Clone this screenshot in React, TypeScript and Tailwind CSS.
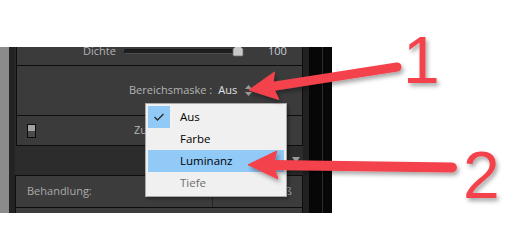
import React from "react";

const menuItems = [
    { label: "Aus", checked: true, active: false, disabled: false },
    { label: "Farbe", checked: false, active: false, disabled: false },
    { label: "Luminanz", checked: false, active: true, disabled: false },
    { label: "Tiefe", checked: false, active: false, disabled: true },
];

export default function App() {
    return (
        <div className="relative w-[518px] h-[242px] bg-white overflow-hidden font-['Open_Sans',sans-serif]">
            {/* Lightroom panel crop */}
            <div className="mt-[47px] flex w-[332px] h-[166px]">
                <div className="w-[9px] bg-[#8b8b8b]" />
                <div className="w-[6px] bg-[#232323]" />

                <div className="w-[288px] flex flex-col bg-[#2c2c2c]">
                    {/* Upper panel */}
                    <div className="ml-[1px] w-[287px] flex flex-col bg-[#3b3b3b] border-x border-[#0e0e0e]">
                        <div className="h-[19px] overflow-hidden border-b border-[#0e0e0e]">
                            <div className="-mt-[6px] h-[20px] flex items-center pl-[66px] text-[11px] text-[#b4b4b4]">
                                <span>Dichte</span>
                                <div className="relative ml-[8px] w-[118px] h-[5px] rounded-full bg-[#1e1e1e] border border-[#161616] border-b-[#4d4d4d]">
                                    <svg className="absolute -top-[6px] left-[107px]" width="12" height="13" viewBox="0 0 12 13">
                                        <path d="M6 0 L11 5 L11 11 Q11 12 10 12 L2 12 Q1 12 1 11 L1 5 Z" fill="#c9c9c9" stroke="#6a6a6a" strokeWidth="0.8" />
                                    </svg>
                                </div>
                                <span className="ml-[26px] text-[#c6d0da]">100</span>
                            </div>
                        </div>

                        <div className="h-[50px] flex items-center pl-[112px] border-b border-[#0e0e0e] text-[11px]">
                            <span className="text-[#b4b4b4]">Bereichsmaske :</span>
                            <span className="ml-[6px] text-[#e2e2e2]">Aus</span>
                            <svg className="ml-[8px]" width="7" height="11" viewBox="0 0 7 11">
                                <path d="M3.5 0 L7 4 L0 4 Z M0 7 L7 7 L3.5 11 Z" fill="#9a9a9a" />
                            </svg>
                        </div>

                        <div className="h-[30px] flex items-center pl-[10px] border-b border-[#0e0e0e] text-[11px] text-[#b4b4b4]">
                            <div className="w-[9px] h-[14px] flex flex-col border border-[#0c0c0c]">
                                <div className="h-1/2 bg-[#a2a2a2]" />
                                <div className="h-1/2 bg-[#4a4a4a]" />
                            </div>
                            <span className="ml-[98px]">Zurücksetzen</span>
                        </div>
                    </div>

                    {/* Section header gap */}
                    <div className="h-[29px] flex items-center justify-end pr-[3px]">
                        <svg width="8" height="7" viewBox="0 0 8 7">
                            <path d="M0 0 L8 0 L4 6 Z" fill="#9b9b9b" />
                        </svg>
                    </div>

                    {/* Lower panel */}
                    <div className="flex-1 flex flex-col bg-[#3c3c3c] border-x border-t border-[#0e0e0e]">
                        <div className="h-[32px] flex border-b border-[#0e0e0e] text-[11px] text-[#ababab]">
                            <div className="w-[197px] flex items-center pl-[11px] border-r border-[#262626]">
                                <span>Behandlung:</span>
                                <span className="ml-auto mr-[24px] text-[#c4c4c4]">Farbe</span>
                            </div>
                            <div className="flex-1 flex items-center justify-center pl-[2px] text-[#b4b4b4]">
                                Schwarzweiß
                            </div>
                        </div>
                        <div className="flex-1" />
                    </div>
                </div>

                <div className="w-[6px] bg-[#212121]" />
                <div className="w-[13px] bg-[#070707]" />
                <div className="w-[1px] bg-[#2e2e2e]" />
                <div className="w-[9px] bg-[#070707]" />
            </div>

            {/* Popup menu */}
            <div className="absolute left-[145px] top-[103px] w-[142px] p-[2px] bg-[#f0f0f0] border border-[#a9a9a9] shadow-[2px_2px_3px_rgba(0,0,0,0.35)] text-[11.5px]">
                {menuItems.map((item) => (
                    <div
                        key={item.label}
                        className={`h-[22px] flex items-center ${item.active ? "bg-[#91c9f7]" : ""}`}
                    >
                        <div className={`w-[22px] h-[22px] flex items-center justify-center ${item.checked ? "bg-[#91c9f7]" : ""}`}>
                            {item.checked && (
                                <svg width="12" height="10" viewBox="0 0 12 10">
                                    <path d="M1.5 5 L4.5 8 L10.5 2" fill="none" stroke="#2d2d2d" strokeWidth="1.4" />
                                </svg>
                            )}
                        </div>
                        <span className={`ml-[10px] ${item.disabled ? "text-[#6d6d6d]" : "text-black"}`}>
                            {item.label}
                        </span>
                    </div>
                ))}
            </div>

            {/* Annotation arrows */}
            <svg className="absolute inset-0 pointer-events-none" width="518" height="242" viewBox="0 0 518 242">
                <defs>
                    <filter id="shadow" x="-20%" y="-20%" width="140%" height="140%">
                        <feDropShadow dx="2" dy="3" stdDeviation="2" floodColor="#000" floodOpacity="0.35" />
                    </filter>
                </defs>
                <g filter="url(#shadow)" fill="#f3424b" stroke="#f3424b">
                    <line x1="272" y1="86.5" x2="397" y2="67" strokeWidth="9" strokeLinecap="round" />
                    <polygon points="249,90 274.6,71.9 272.5,86 278.8,99.5" strokeWidth="1" strokeLinejoin="round" />
                    <line x1="272" y1="165" x2="452" y2="167.5" strokeWidth="10" strokeLinecap="round" />
                    <polygon points="248,164.8 276.7,151 273.5,165 278,179" strokeWidth="1" strokeLinejoin="round" />
                    <text x="403" y="83" stroke="none" fontSize="66" fontFamily="'Liberation Sans', Arial, sans-serif">1</text>
                    <text x="463" y="198" stroke="none" fontSize="66" fontFamily="'Liberation Sans', Arial, sans-serif">2</text>
                </g>
            </svg>
        </div>
    );
}
